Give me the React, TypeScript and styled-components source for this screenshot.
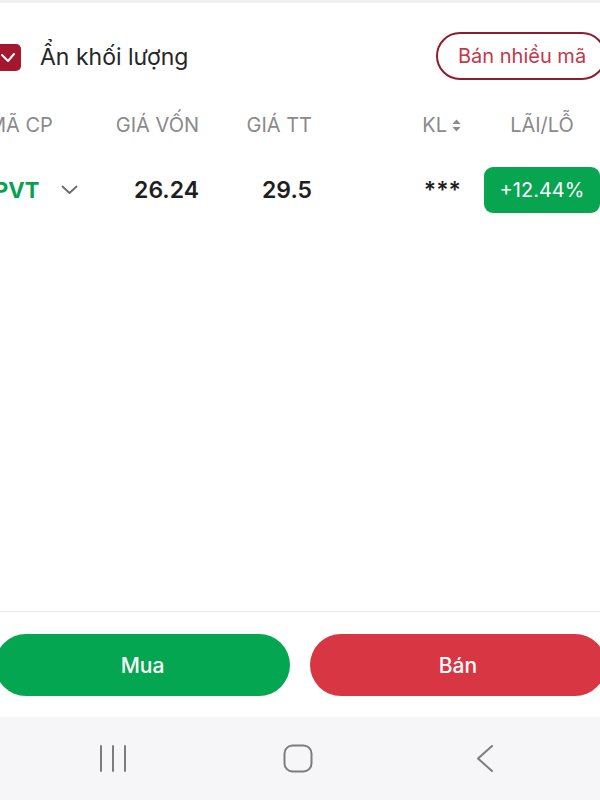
import React from 'react'
import styled, { createGlobalStyle } from 'styled-components'

const GlobalStyle = createGlobalStyle`
  html, body {
    margin: 0;
    padding: 0;
    background: #ffffff;
  }
  body {
    font-family: Inter, Roboto, "Noto Sans", "Liberation Sans", sans-serif;
  }
`

const Page = styled.div`
  width: 600px;
  height: 800px;
  display: flex;
  flex-direction: column;
  overflow: hidden;
  background: #ffffff;
`

const TopStrip = styled.div`
  height: 3px;
  background: #f1f1f3;
`

const Toolbar = styled.div`
  display: flex;
  align-items: center;
  justify-content: space-between;
  padding-top: 29px;
  margin: 0 -6px;
`

const CheckLabel = styled.label`
  display: flex;
  align-items: center;
  gap: 19px;
  font-size: 23px;
  color: #262626;
  padding-top: 2px;
`

const CheckBox = styled.span`
  width: 27px;
  height: 27px;
  border-radius: 5px;
  background: #a3172f;
  display: flex;
  align-items: center;
  justify-content: center;
`

const OutlineButton = styled.button`
  height: 48px;
  padding: 0 20px;
  border: 2px solid #8e1b30;
  border-radius: 24px;
  background: #ffffff;
  color: #c4374b;
  font-family: inherit;
  font-size: 20px;
  width: 170px;
  text-align: left;
  white-space: nowrap;
`

const Grid = styled.div<{ $top: number; $height: number }>`
  display: grid;
  grid-template-columns: 112px 99px 113px 149px 151px;
  align-items: center;
  margin: ${p => p.$top}px -12px 0;
  height: ${p => p.$height}px;
`

const HeadCell = styled.div<{ $align?: string }>`
  font-size: 20px;
  color: #8a8a8a;
  white-space: nowrap;
  display: flex;
  align-items: center;
  justify-content: ${p => (p.$align === 'left' ? 'flex-start' : 'flex-end')};
  gap: 5px;
`

const LastCol = styled.div`
  width: 116px;
  margin-left: 23px;
  display: flex;
  justify-content: center;
`

const CodeCell = styled.div`
  display: flex;
  align-items: center;
  gap: 22px;
  padding-left: 6px;
  color: #07a24d;
  font-weight: 700;
  font-size: 22px;
`

const NumCell = styled.div`
  text-align: right;
  font-size: 23px;
  font-weight: 600;
  color: #1f1f1f;
`

const Badge = styled.div`
  width: 116px;
  height: 46px;
  margin-left: 23px;
  border-radius: 9px;
  background: #07a54f;
  color: #ffffff;
  font-size: 20px;
  display: flex;
  align-items: center;
  justify-content: center;
`

const Spacer = styled.div`
  flex: 1;
`

const ActionBar = styled.div`
  border-top: 1px solid #e8e8e8;
  padding: 22px 0 21px;
  margin: 0 -6px 0 -5px;
  display: grid;
  grid-template-columns: 295px 296px;
  gap: 20px;
`

const ActionButton = styled.button<{ $color: string }>`
  height: 62px;
  border: none;
  border-radius: 31px;
  background: ${p => p.$color};
  color: #ffffff;
  font-family: inherit;
  font-size: 21px;
  font-weight: 500;
`

const NavBar = styled.div`
  height: 83px;
  background: #f6f6f8;
  display: grid;
  grid-template-columns: 226px 143px 1fr;
  align-items: center;
  justify-items: center;
`

const Check = () => (
  <svg width="16" height="12" viewBox="0 0 16 12">
    <polyline points="2,4 8,10 14,3" fill="none" stroke="#ffffff" strokeWidth="2" strokeLinecap="round" strokeLinejoin="round" />
  </svg>
)

const SortIcon = () => (
  <svg width="9" height="13" viewBox="0 0 9 13">
    <polygon points="4.5,0.5 8.5,5 0.5,5" fill="#8a8a8a" />
    <polygon points="0.5,8 8.5,8 4.5,12.5" fill="#8a8a8a" />
  </svg>
)

const ChevronDown = () => (
  <svg width="17" height="10" viewBox="0 0 17 10">
    <polyline points="1.5,1.5 8.5,8 15.5,1.5" fill="none" stroke="#6b6b6b" strokeWidth="1.8" strokeLinecap="round" strokeLinejoin="round" />
  </svg>
)

export default function App() {
  return (
    <Page>
      <GlobalStyle />
      <TopStrip />
      <Toolbar>
        <CheckLabel>
          <CheckBox><Check /></CheckBox>
          Ẩn khối lượng
        </CheckLabel>
        <OutlineButton>Bán nhiều mã</OutlineButton>
      </Toolbar>

      <Grid $top={25} $height={40}>
        <HeadCell $align="left">MÃ CP</HeadCell>
        <HeadCell>GIÁ VỐN</HeadCell>
        <HeadCell>GIÁ TT</HeadCell>
        <HeadCell>KL<SortIcon /></HeadCell>
        <LastCol><HeadCell>LÃI/LỖ</HeadCell></LastCol>
      </Grid>

      <Grid $top={22} $height={46}>
        <CodeCell>PVT<ChevronDown /></CodeCell>
        <NumCell>26.24</NumCell>
        <NumCell>29.5</NumCell>
        <NumCell>***</NumCell>
        <Badge>+12.44%</Badge>
      </Grid>

      <Spacer />

      <ActionBar>
        <ActionButton $color="#05a651">Mua</ActionButton>
        <ActionButton $color="#d93643">Bán</ActionButton>
      </ActionBar>

      <NavBar>
        <svg width="30" height="29" viewBox="0 0 30 29">
          <g stroke="#7c7c7c" strokeWidth="2" strokeLinecap="round">
            <line x1="3" y1="2" x2="3" y2="27" />
            <line x1="15" y1="2" x2="15" y2="27" />
            <line x1="27" y1="2" x2="27" y2="27" />
          </g>
        </svg>
        <svg width="30" height="29" viewBox="0 0 30 29">
          <rect x="1.5" y="1.5" width="27" height="26" rx="8" fill="none" stroke="#7c7c7c" strokeWidth="2" />
        </svg>
        <svg width="20" height="29" viewBox="0 0 20 29">
          <polyline points="17,2 3,14.5 17,27" fill="none" stroke="#7c7c7c" strokeWidth="2" strokeLinecap="round" strokeLinejoin="round" />
        </svg>
      </NavBar>
    </Page>
  )
}
